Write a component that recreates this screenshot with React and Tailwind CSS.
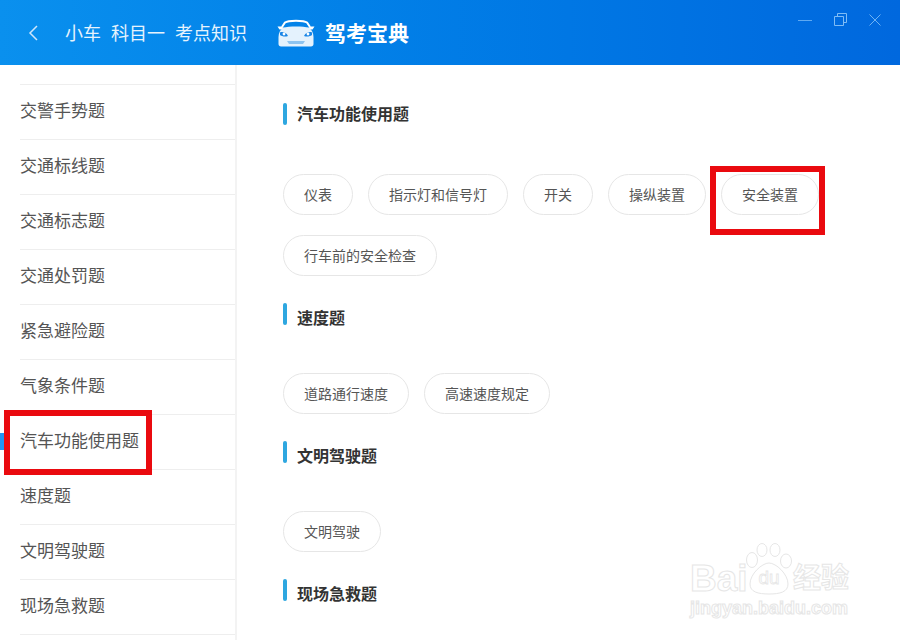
const menu = ['交警手势题', '交通标线题', '交通标志题', '交通处罚题', '紧急避险题', '气象条件题', '汽车功能使用题', '速度题', '文明驾驶题', '现场急救题']

const sections = [
  { title: '汽车功能使用题', tags: ['仪表', '指示灯和信号灯', '开关', '操纵装置', '安全装置', '行车前的安全检查'] },
  { title: '速度题', tags: ['道路通行速度', '高速速度规定'] },
  { title: '文明驾驶题', tags: ['文明驾驶'] },
  { title: '现场急救题', tags: [] },
]

function CarLogo() {
  return (
    <svg width="38" height="28" viewBox="0 0 38 28" fill="none">
      {/* roof */}
      <path d="M5 8 8 3.5C11 1 27 1 30 3.5L33 8" stroke="#fff" strokeWidth="2" />
      {/* mirrors */}
      <path d="M0.5 7.5h5l1 3h-4zM37.5 7.5h-5l-1 3h4z" fill="#fff" />
      {/* body */}
      <path d="M6 8.5C12 7 26 7 32 8.5L35 12c1 2 1.5 4 1.5 6v7c0 1.5-1 2.5-2.5 2.5H4c-1.500 0-2.500-1-2.500-2.500v-7c0-2 .5-4 1.500-6z" fill="#e4f2fd" />
      <path d="M3 13.500c2-1 6-.5 8 3.500-3 1-6 .5-8-1z" fill="#1a86e6" />
      <path d="M35 13.500c-2-1-6-.5-8 3.500 3 1 6 .5 8-1z" fill="#1a86e6" />
      <circle cx="7" cy="15" r="1.400" fill="#fff" />
      <circle cx="31" cy="15" r="1.400" fill="#fff" />
      <path d="M10 22h18l-2 3H12z" fill="#8ec4f0" />
    </svg>
  )
}

function Watermark() {
  return (
    <div className="absolute left-[690px] top-[543px] w-[165px] pointer-events-none font-['Liberation_Sans','Noto_Sans_CJK_SC',sans-serif] text-transparent [-webkit-text-stroke:1px_#e6e6e6]">
      <div className="flex h-[52px] items-end">
        <span className="w-[55px] shrink-0 text-[37px] font-bold leading-[33px]">Bai</span>
        <svg width="48" height="52" viewBox="0 0 48 52" fill="none" stroke="#e6e6e6" className="shrink-0">
          <ellipse cx="7" cy="17" rx="5.500" ry="7.500" />
          <ellipse cx="17" cy="7" rx="5" ry="6.500" />
          <ellipse cx="30" cy="7" rx="5" ry="6.500" />
          <ellipse cx="41" cy="18" rx="5.500" ry="7" />
          <path d="M24 20c7 0 19 11 19 21 0 8-8 10-19 10S5 49 5 41c0-10 12-21 19-21z" />
          <text x="24" y="41" textAnchor="middle" fontSize="19" fontWeight="400" strokeWidth="0.800">du</text>
        </svg>
        <span className="text-[28px] font-bold leading-[33px]">经验</span>
      </div>
      <div className="mt-[4px] whitespace-nowrap text-[18px] font-bold leading-none">jingyan.baidu.com</div>
    </div>
  )
}

export default function App() {
  return (
    <div className="relative h-[640px] w-[900px] overflow-hidden bg-white font-['Noto_Sans_CJK_SC','Noto_Sans',sans-serif]">
      {/* Header */}
      <header className="flex h-[65px] items-center bg-gradient-to-r from-[#0a90ee] to-[#0068de] text-white">
        <svg width="10" height="16" viewBox="0 0 10 16" fill="none" stroke="#cfe6fb" strokeWidth="1.500" className="ml-[28px]">
          <path d="M9 1 2 8l7 7" />
        </svg>
        <div className="ml-[27px] flex gap-[10px] text-[18px] text-[#e6f3fd]">
          <span>小车</span>
          <span>科目一</span>
          <span>考点知识</span>
        </div>
        <div className="ml-[30px] flex items-center gap-[10px]">
          <CarLogo />
          <span className="text-[21px] font-bold leading-none">驾考宝典</span>
        </div>
        <div className="ml-auto mr-[19px] -mt-[26px] flex items-center gap-[22px]">
          <svg width="14" height="14" viewBox="0 0 14 14" fill="none" stroke="#5ea9f2">
            <path d="M0 7.500h14" />
          </svg>
          <svg width="13" height="13" viewBox="0 0 13 13" fill="none" stroke="#7fbcf5">
            <path d="M.5 3.500h9v9h-9zM3.500 3V.5h9v9H10" />
          </svg>
          <svg width="12" height="12" viewBox="0 0 12 12" fill="none" stroke="#6db2f4">
            <path d="m.5.5 11 11M11.500.5l-11 11" />
          </svg>
        </div>
      </header>

      <div className="flex h-[575px]">
        {/* Sidebar */}
        <aside className="w-[237px] shrink-0 border-r-2 border-[#f3f3f3] pt-[19px] pl-[20px]">
          <ul className="border-t border-[#eeeeee]">
            {menu.map((item) => (
              <li key={item} className="flex h-[55px] items-center border-b border-[#eeeeee] pb-[5px] text-[17px] leading-none text-[#555555]">
                {item}
              </li>
            ))}
          </ul>
        </aside>

        {/* Content */}
        <main className="flex-1 pl-[46px] pt-[11px]">
          {sections.map((section, i) => (
            <section key={section.title} className="mt-[27px]">
              <div className="flex h-[22px] items-center gap-[10px]">
                <span className="h-[22px] w-[4px] rounded-full bg-[#2ea7e0]" />
                <h2 className={i === 0 ? 'mb-[2px] text-[16px] font-bold leading-none text-[#333333]' : 'mt-[6px] text-[16px] font-bold leading-none text-[#333333]'}>
                  {section.title}
                </h2>
              </div>
              {section.tags.length > 0 && (
                <div className={i === 0 ? 'mt-[49px] flex w-[560px] flex-wrap gap-x-[15px] gap-y-[20px]' : 'mt-[48px] flex w-[560px] flex-wrap gap-x-[15px] gap-y-[20px]'}>
                  {section.tags.map((tag) => (
                    <span key={tag} className="flex h-[41px] items-center rounded-full border border-[#e6e6e6] px-[20px] pb-[2px] text-[14px] leading-none text-[#555555]">
                      {tag}
                    </span>
                  ))}
                </div>
              )}
            </section>
          ))}
        </main>
      </div>

      {/* Active marker */}
      <span className="absolute left-0 top-[433px] h-[17px] w-[4px] bg-[#2196f3]" />

      {/* Red annotation boxes */}
      <div className="absolute left-[4px] top-[410px] h-[65px] w-[148px] border-[6px] border-[#ea0a0f]" />
      <div className="absolute left-[710px] top-[166px] h-[69px] w-[115px] border-[6px] border-[#ea0a0f]" />

      <Watermark />
    </div>
  )
}
